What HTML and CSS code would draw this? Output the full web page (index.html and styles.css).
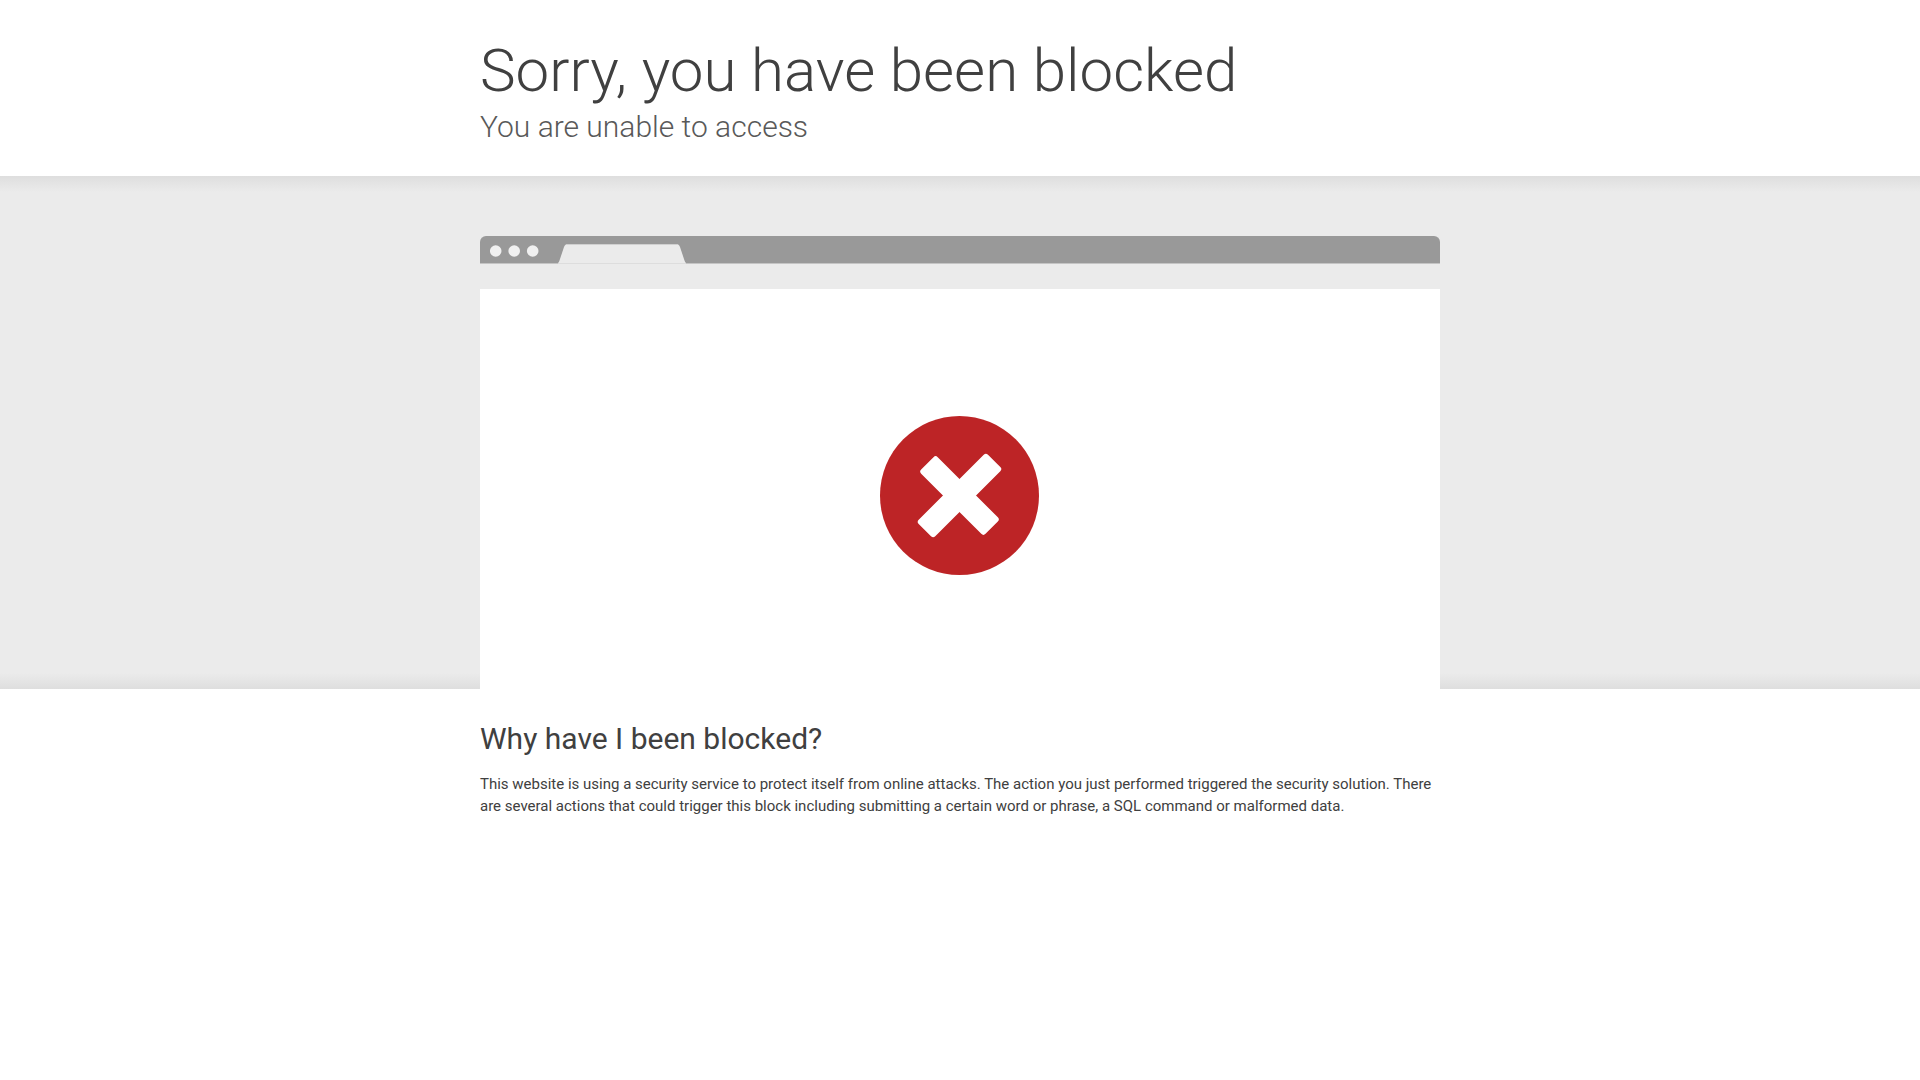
FILE: index.html
```
<!DOCTYPE html>
<html lang="en-US">
<head>
    <meta charset="UTF-8">
    <meta name="viewport" content="width=device-width, initial-scale=1.0">
    <title>Attention Required!</title>
    <link rel="stylesheet" href="styles.css">
</head>
<body>
    <!-- Header -->
    <header class="wrapper header">
        <h1>Sorry, you have been blocked</h1>
        <h2 class="subheadline">You are unable to access</h2>
    </header>

    <!-- Browser illustration -->
    <section class="highlight">
        <div class="wrapper">
            <div class="screenshot">
                <div class="browser-bar">
                    <svg class="dots" viewBox="0 0 49 12" aria-hidden="true">
                        <g fill="#f0f0f0">
                            <circle cx="5.7" cy="6" r="5.8"/>
                            <circle cx="24.2" cy="6" r="5.8"/>
                            <circle cx="42.7" cy="6" r="5.8"/>
                        </g>
                    </svg>
                    <svg class="tab" viewBox="0 0 128 20" aria-hidden="true">
                        <path d="M0 19 Q1 18 1.5 16.5 L6 3 Q7 0 10 0 H118 Q121 0 122 3 L126.5 16.5 Q127 18 128 19 Z" fill="#ebebeb"/>
                        <path d="M9 0.5 H119" stroke="#d0d0d0"/>
                        <path d="M0 19.5 H128" stroke="#dddddd"/>
                    </svg>
                </div>
                <div class="browser-page">
                    <svg class="icon-error" viewBox="0 0 160 160" role="img" aria-label="Blocked">
                        <circle cx="79.5" cy="79.5" r="79.5" fill="#bd2426"/>
                        <g fill="#ffffff" transform="translate(79.5 79.5) rotate(45)">
                            <rect x="-45.5" y="-11.7" width="91" height="23.4" rx="3"/>
                            <rect x="-11.7" y="-49" width="23.4" height="98" rx="3"/>
                        </g>
                    </svg>
                </div>
            </div>
        </div>
    </section>

    <!-- Explanation -->
    <section class="wrapper explanation">
        <h2>Why have I been blocked?</h2>
        <p>This website is using a security service to protect itself from online attacks. The action you just performed triggered the security solution. There are several actions that could trigger this block including submitting a certain word or phrase, a SQL command or malformed data.</p>
    </section>
</body>
</html>
```
FILE: styles.css
```
* {
    margin: 0;
    padding: 0;
    box-sizing: border-box;
}

body {
    background-color: #ffffff;
    color: #404040;
    font-family: Roboto, "Liberation Sans", sans-serif;
    font-size: 15px;
    line-height: 22px;
}

.wrapper {
    width: 100%;
    max-width: 960px;
    margin: 0 auto;
}

.header {
    padding: 35px 0 29px;
}

h1 {
    font-size: 60px;
    font-weight: 300;
    line-height: 72px;
}

h2 {
    font-size: 30px;
    font-weight: 400;
    line-height: 40px;
}

.subheadline {
    color: #595959;
    font-weight: 300;
}

.highlight {
    padding-top: 60px;
    background-color: #ebebeb;
    background-image: linear-gradient(to bottom, #dedede, #ebebeb), linear-gradient(to top, #dedede, #ebebeb);
    background-position: top, bottom;
    background-repeat: no-repeat;
    background-size: 100% 16px;
}

.browser-bar {
    display: flex;
    align-items: flex-end;
    gap: 19px;
    height: 28px;
    padding-left: 10px;
    background-color: #999999;
    box-shadow: inset 0 -1px #c4c4c4;
    border-radius: 6px 6px 0 0;
}

.dots {
    width: 49px;
    height: 12px;
    margin-bottom: 7px;
}

.tab {
    width: 128px;
    height: 20px;
}

.browser-page {
    display: flex;
    align-items: center;
    justify-content: center;
    min-height: 425px;
    padding-top: 14px;
    border-top: 25px solid #ebebeb;
    background-color: #ffffff;
}

.icon-error {
    width: 160px;
    height: 160px;
}

.explanation {
    padding: 30px 0;
}

.explanation h2 {
    margin-bottom: 14px;
}
```
